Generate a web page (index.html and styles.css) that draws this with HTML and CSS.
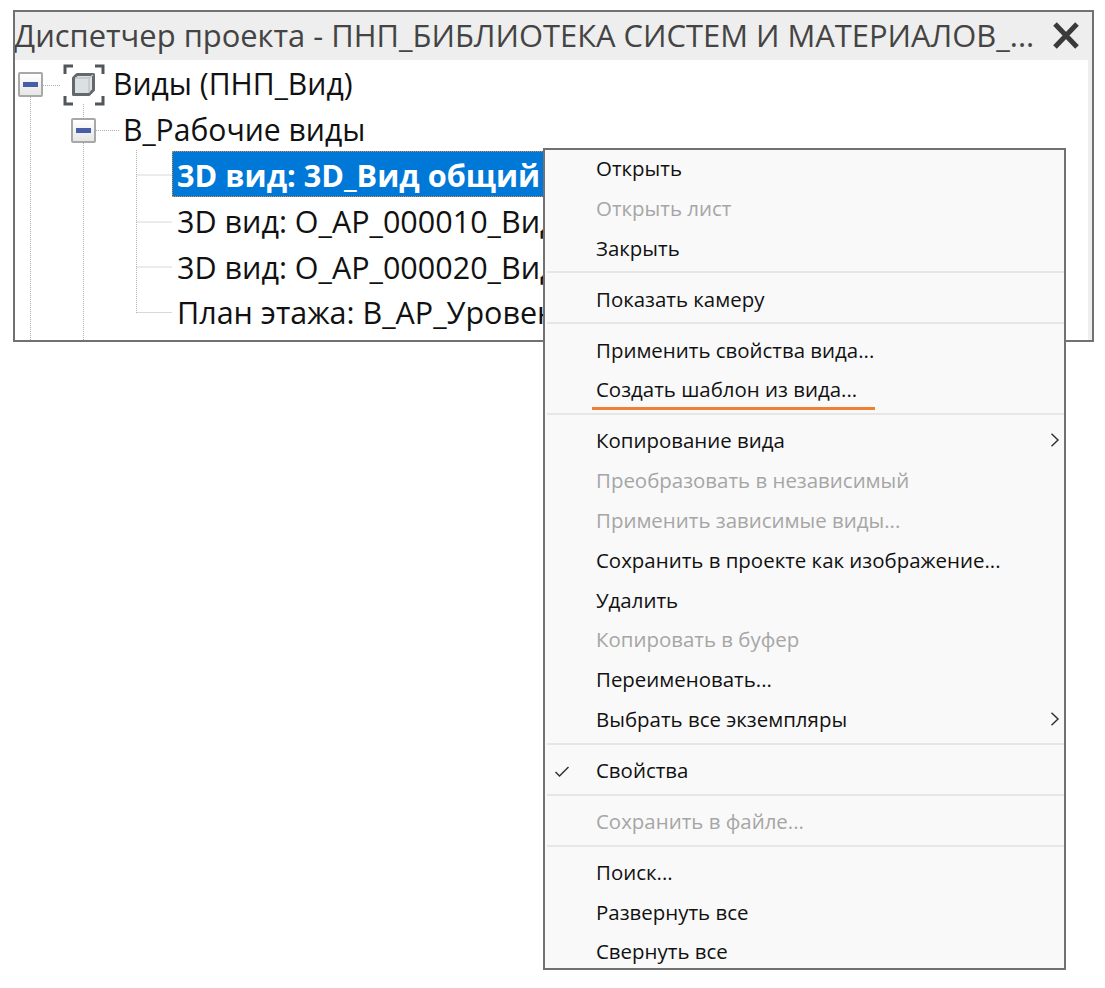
FILE: index.html
```html
<!DOCTYPE html>
<html lang="ru">
<head>
<meta charset="utf-8">
<title>Диспетчер проекта</title>
<link rel="stylesheet" href="styles.css">
</head>
<body>
<div class="stage">
  <section class="panel">
    <header class="titlebar">
      <span class="title">Диспетчер проекта - ПНП_БИБЛИОТЕКА СИСТЕМ И МАТЕРИАЛОВ_...</span>
      <svg class="close" width="28" height="29" viewBox="0 0 28 29"><path d="M3 3 25 26M25 3 3 26" fill="none" stroke="#3a3a3a" stroke-width="5"/></svg>
    </header>
    <div class="tree">
      <svg class="tree-lines" width="200" height="282" viewBox="0 0 200 282">
        <path d="M15.500 37V282M68.500 44V57M68.500 83V282M121.500 90V253M121.500 115H157M121.500 162H157M121.500 207H157M121.500 252.500H157M28 25.500H46M81 70.500H104" fill="none" stroke="#b0b0b0" stroke-width="1" stroke-dasharray="1 1"/>
      </svg>
      <div class="row level-0">
        <span class="expander"><span class="minus"></span></span>
        <svg class="view-icon" width="42" height="42" viewBox="0 0 42 42">
          <path d="M2 10V2H10M32 2H40V10M40 32V40H32M10 40H2V32" fill="none" stroke="#50565a" stroke-width="3"/>
          <path d="M14 10.500H30.500V26L26 30.500H10.500V14Z" fill="#dbe0e3" stroke="#62686d" stroke-width="3" stroke-linejoin="round"/>
          <path d="M12 14H26V29M26 14 30 11" fill="none" stroke="#c0c5c8" stroke-width="1.400"/>
        </svg>
        <span class="label">Виды (ПНП_Вид)</span>
      </div>
      <div class="row level-1">
        <span class="expander"><span class="minus"></span></span>
        <span class="label">В_Рабочие виды</span>
      </div>
      <div class="row level-2"><span class="label selected">3D вид: 3D_Вид общий</span></div>
      <div class="row level-2"><span class="label">3D вид: О_АР_000010_Вид</span></div>
      <div class="row level-2"><span class="label">3D вид: О_АР_000020_Вид</span></div>
      <div class="row level-2"><span class="label">План этажа: В_АР_Уровень</span></div>
    </div>
  </section>

  <nav class="menu">
    <div class="item">Открыть</div>
    <div class="item off">Открыть лист</div>
    <div class="item">Закрыть</div>
    <div class="sep"></div>
    <div class="item">Показать камеру</div>
    <div class="sep"></div>
    <div class="item">Применить свойства вида...</div>
    <div class="item">Создать шаблон из вида...</div>
    <div class="sep"></div>
    <div class="item">Копирование вида<svg class="chev" width="10" height="14" viewBox="0 0 10 14"><path d="M1.500 .8 8 7 1.500 13.200" fill="none" stroke="#333" stroke-width="1.500"/></svg></div>
    <div class="item off">Преобразовать в независимый</div>
    <div class="item off">Применить зависимые виды...</div>
    <div class="item">Сохранить в проекте как изображение...</div>
    <div class="item">Удалить</div>
    <div class="item off">Копировать в буфер</div>
    <div class="item">Переименовать...</div>
    <div class="item">Выбрать все экземпляры<svg class="chev" width="10" height="14" viewBox="0 0 10 14"><path d="M1.500 .8 8 7 1.500 13.200" fill="none" stroke="#333" stroke-width="1.500"/></svg></div>
    <div class="sep"></div>
    <div class="item"><svg class="check" width="16" height="13" viewBox="0 0 16 13"><path d="M1.500 7 5.500 11 14.500 2" fill="none" stroke="#333" stroke-width="1.500"/></svg>Свойства</div>
    <div class="sep"></div>
    <div class="item off">Сохранить в файле...</div>
    <div class="sep"></div>
    <div class="item">Поиск...</div>
    <div class="item">Развернуть все</div>
    <div class="item">Свернуть все</div>
  </nav>
  <div class="underline"></div>
</div>
</body>
</html>
```

FILE: styles.css
```css
* { box-sizing: border-box; }
html, body { margin: 0; background: #fff; }
.stage {
  position: relative;
  width: 1105px;
  height: 988px;
  overflow: hidden;
  padding: 10px 12px 0 13px;
  font-family: "Open Sans", "Noto Sans", sans-serif;
}
.panel {
  width: 1081px;
  height: 332px;
  border: 2px solid #757070;
  background: #eeeeee;
  padding-right: 4px;
  overflow: hidden;
}
.titlebar {
  height: 48px;
  display: flex;
  align-items: center;
  justify-content: space-between;
  padding-right: 8px;
  overflow: hidden;
}
.title {
  font-size: 30.900px;
  color: #444;
  white-space: nowrap;
  margin-left: -1px;
  margin-bottom: 2px;
}
.close { display: block; flex: none; margin-bottom: 2px; }
.tree {
  position: relative;
  height: 280px;
  background: #fff;
  padding-top: 2px;
}
.tree-lines { position: absolute; left: 0; top: 0; }
.row {
  position: relative;
  height: 45.700px;
  display: flex;
  align-items: center;
  white-space: nowrap;
  font-size: 30.500px;
  color: #111;
}
.row .label { margin-bottom: 2px; }
.level-0 { padding-left: 3px; font-size: 30.100px; }
.level-1 { padding-left: 56px; font-size: 30.100px; }
.level-2 { padding-left: 157px; }
.expander {
  width: 25px;
  height: 25px;
  flex: none;
  border: 2px solid #a8a8a8;
  border-radius: 2px;
  background: linear-gradient(#ffffff, #e6e6e6);
  display: flex;
  align-items: center;
  justify-content: center;
}
.minus { width: 15px; height: 5px; background: #4a5ea8; }
.view-icon { margin-left: 20px; flex: none; }
.level-0 .label { margin-left: 8px; }
.level-1 .label { margin-left: 27px; }
.level-2 .label { padding: 0 4px 0 5px; }
.row .selected {
  background: #0078d7;
  color: #fff;
  font-weight: 700;
  font-size: 30.700px;
  height: 46px;
  line-height: 49px;
  margin-bottom: 5px;
  outline: 1px dotted #e08a3c;
  outline-offset: -1px;
}
.menu {
  position: absolute;
  left: 543px;
  top: 148px;
  width: 523px;
  height: 822px;
  border: 2px solid #757070;
  background: #f9f9f9;
  overflow: hidden;
  font-size: 20.450px;
  color: #111;
}
.item {
  position: relative;
  height: 39.800px;
  line-height: 39.800px;
  padding-left: 51px;
  white-space: nowrap;
}
.item:first-child { margin-top: -1px; }
.off { color: #a6a6a6; }
.sep {
  height: 2px;
  margin: 3px 0 6.200px 2px;
  background: #e6e6e6;
}
.chev { position: absolute; right: 4px; top: 12px; }
.check { position: absolute; left: 9px; top: 14px; }
.underline {
  position: absolute;
  left: 592px;
  top: 407px;
  width: 283px;
  height: 3px;
  background: #f07f33;
}
```
